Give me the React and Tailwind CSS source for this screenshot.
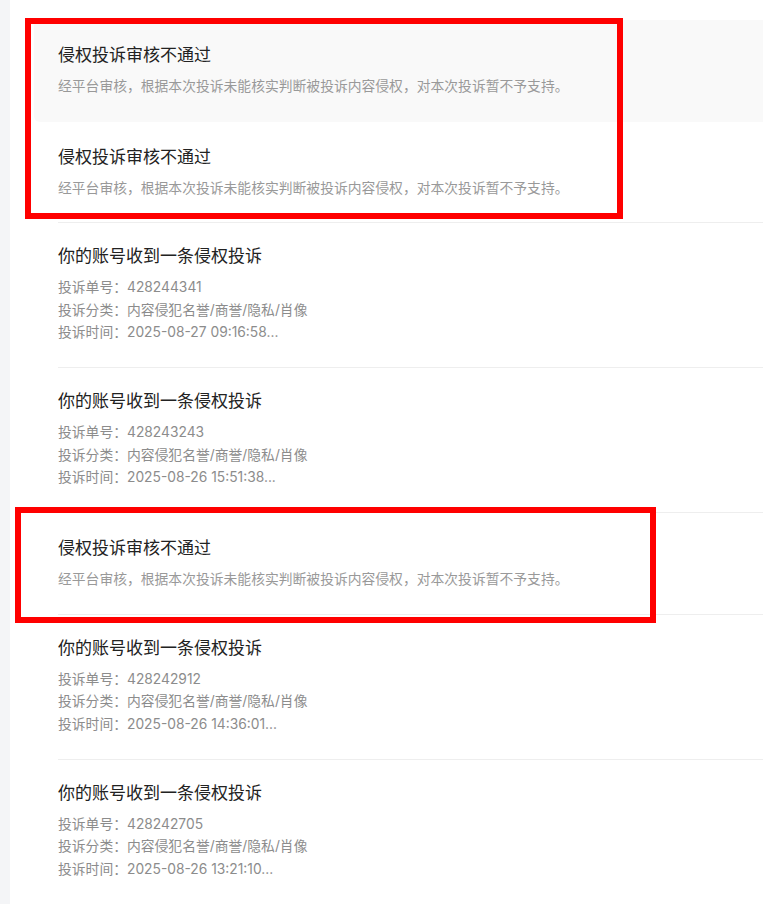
import React from 'react';

const REJECT_DESC = '经平台审核，根据本次投诉未能核实判断被投诉内容侵权，对本次投诉暂不予支持。';

const items = [
  { type: 'notice', active: true },
  { type: 'notice' },
  { type: 'complaint', no: '428244341', time: '2025-08-27 09:16:58...' },
  { type: 'complaint', no: '428243243', time: '2025-08-26 15:51:38...' },
  { type: 'notice' },
  { type: 'complaint', no: '428242912', time: '2025-08-26 14:36:01...' },
  { type: 'complaint', no: '428242705', time: '2025-08-26 13:21:10...' },
];

function NoticeItem({ active }) {
  return (
    <div className={active ? 'bg-[#f9f9f9] rounded-l-[6px] pl-6' : 'pl-6'}>
      <div
        className={`pt-[23px] pb-[24.5px] border-b ${
          active ? 'border-transparent' : 'border-[#eeeeee]'
        }`}
      >
        <div className="text-[17px] leading-[25px] text-[#222]">侵权投诉审核不通过</div>
        <div className="mt-2 text-[13.8px] leading-[20px] text-[#999]">{REJECT_DESC}</div>
      </div>
    </div>
  );
}

function ComplaintItem({ no, time }) {
  return (
    <div className="pl-6">
      <div className="pt-[21px] pb-[23.5px] border-b border-[#eeeeee]">
        <div className="text-[17px] leading-[24px] text-[#222]">你的账号收到一条侵权投诉</div>
        <div className="mt-2 text-[13.8px] leading-[22.5px] text-[#8c8c8c]">
          <div>投诉单号：{no}</div>
          <div>投诉分类：内容侵犯名誉/商誉/隐私/肖像</div>
          <div>投诉时间：{time}</div>
        </div>
      </div>
    </div>
  );
}

export default function App() {
  return (
    <div
      className="relative flex min-h-[904px] bg-white overflow-hidden"
      style={{ fontFamily: 'Inter, "Noto Sans CJK SC", sans-serif' }}
    >
      <div className="w-[10px] shrink-0 bg-[#f4f5f7]" />
      <div className="flex-1 pl-6 pt-[20px]">
        {items.map((it, i) =>
          it.type === 'notice' ? (
            <NoticeItem key={i} active={it.active} />
          ) : (
            <ComplaintItem key={i} no={it.no} time={it.time} />
          )
        )}
      </div>

      {/* annotation boxes */}
      <div className="absolute left-[25px] top-[18px] w-[598px] h-[201px] border-[6px] border-[#ff0000] pointer-events-none" />
      <div className="absolute left-[15px] top-[507px] w-[641px] h-[116px] border-[6px] border-[#ff0000] pointer-events-none" />
    </div>
  );
}
